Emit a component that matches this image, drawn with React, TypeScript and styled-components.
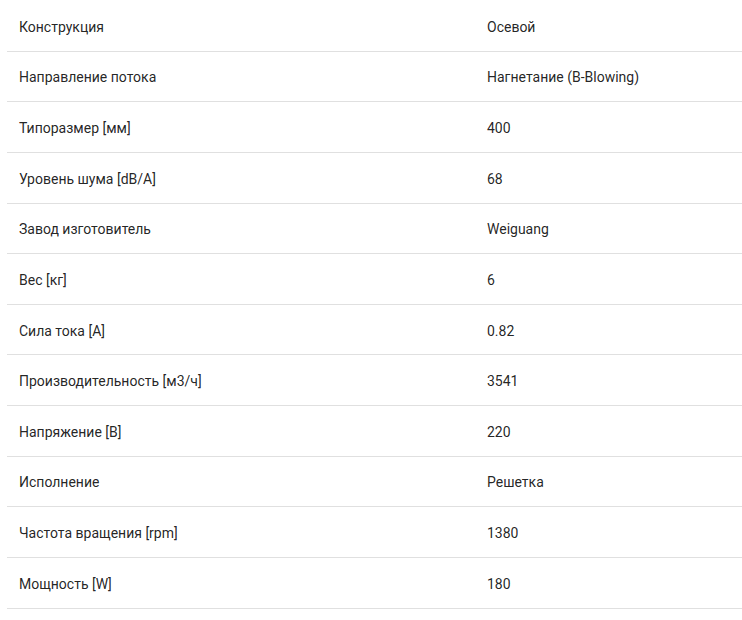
import React from "react";
import styled, { createGlobalStyle } from "styled-components";

const Global = createGlobalStyle`
  html, body { margin: 0; padding: 0; background: #fff; }
  body { font-family: Roboto, "Noto Sans", Arial, sans-serif; }
`;

const Table = styled.div`
  padding: 1px 0 0 7px;
  display: flex;
  flex-direction: column;
`;

const Row = styled.div`
  display: grid;
  grid-template-columns: 468px 1fr;
  align-items: center;
  box-sizing: border-box;
  height: 50.64px;
  padding: 2px 12px 0;
  border-bottom: 1px solid #e0e0e0;
`;

const Cell = styled.div`
  font-size: 14px;
  line-height: 20px;
  color: rgba(0, 0, 0, 0.87);
  white-space: nowrap;
`;

const rows: [string, string][] = [
  ["Конструкция", "Осевой"],
  ["Направление потока", "Нагнетание (B-Blowing)"],
  ["Типоразмер [мм]", "400"],
  ["Уровень шума [dB/A]", "68"],
  ["Завод изготовитель", "Weiguang"],
  ["Вес [кг]", "6"],
  ["Сила тока [A]", "0.82"],
  ["Производительность [м3/ч]", "3541"],
  ["Напряжение [В]", "220"],
  ["Исполнение", "Решетка"],
  ["Частота вращения [rpm]", "1380"],
  ["Мощность [W]", "180"],
];

export default function App() {
  return (
    <>
      <Global />
      <Table>
        {rows.map(([k, v]) => (
          <Row key={k}>
            <Cell>{k}</Cell>
            <Cell>{v}</Cell>
          </Row>
        ))}
      </Table>
    </>
  );
}
